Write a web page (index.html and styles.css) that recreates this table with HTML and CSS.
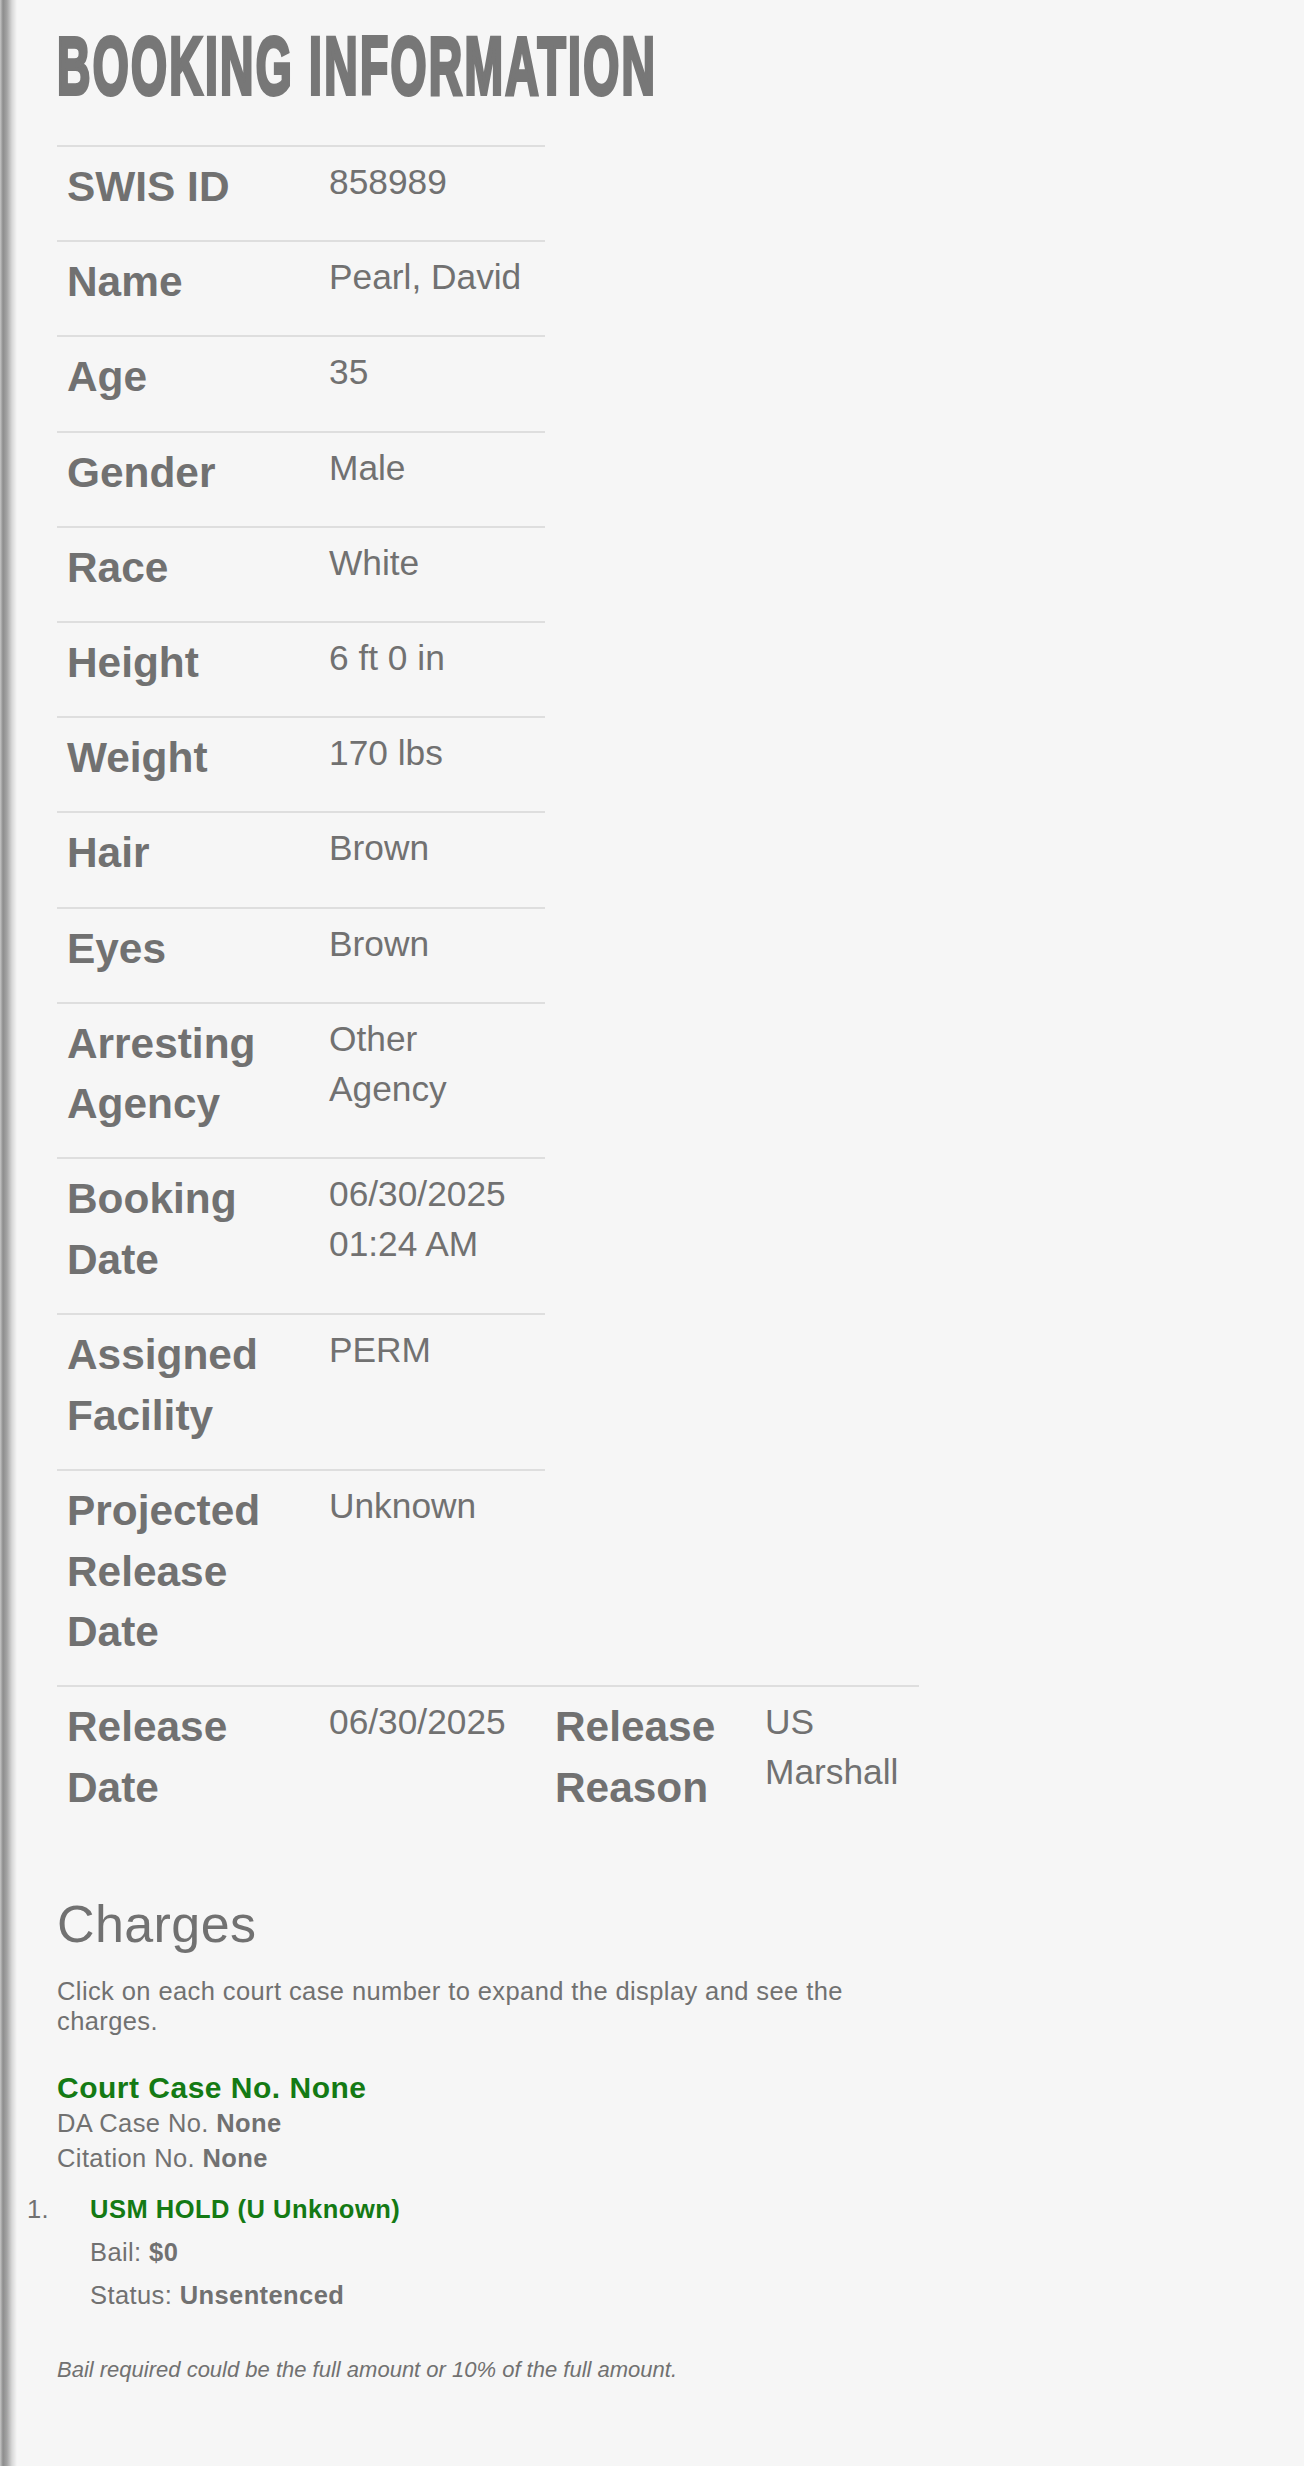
FILE: index.html
```html
<!DOCTYPE html>
<html lang="en">
<head>
    <meta charset="UTF-8">
    <meta name="viewport" content="width=device-width, initial-scale=1.0">
    <title>Booking Information</title>
    <link rel="stylesheet" href="styles.css">
</head>
<body>
    <div class="container">
        <h1 class="page-title">Booking Information</h1>

        <table class="booking">
            <tr><th class="col-label">SWIS ID</th><td class="col-value">858989</td></tr>
            <tr><th>Name</th><td>Pearl, David</td></tr>
            <tr><th>Age</th><td>35</td></tr>
            <tr><th>Gender</th><td>Male</td></tr>
            <tr><th>Race</th><td>White</td></tr>
            <tr><th>Height</th><td>6 ft 0 in</td></tr>
            <tr><th>Weight</th><td>170 lbs</td></tr>
            <tr><th>Hair</th><td>Brown</td></tr>
            <tr><th>Eyes</th><td>Brown</td></tr>
            <tr><th>Arresting Agency</th><td>Other Agency</td></tr>
            <tr><th>Booking Date</th><td>06/30/2025 01:24 AM</td></tr>
            <tr><th>Assigned Facility</th><td>PERM</td></tr>
            <tr><th>Projected Release Date</th><td>Unknown</td></tr>
        </table>

        <table class="booking wide">
            <tr>
                <th class="col-label">Release Date</th>
                <td class="col-value">06/30/2025</td>
                <th class="col-label2">Release Reason</th>
                <td class="col-value2">US Marshall</td>
            </tr>
        </table>

        <h2 class="charges-title">Charges</h2>
        <p class="hint">Click on each court case number to expand the display and see the charges.</p>

        <div class="case">
            <h3 class="case-title">Court Case No. None</h3>
            <div class="case-line">DA Case No. <strong>None</strong></div>
            <div class="case-line">Citation No. <strong>None</strong></div>

            <ol class="charge-list">
                <li>
                    <span class="num">1.</span>
                    <div class="charge">
                        <div class="charge-name">USM HOLD (U Unknown)</div>
                        <div>Bail: <strong>$0</strong></div>
                        <div>Status: <strong>Unsentenced</strong></div>
                    </div>
                </li>
            </ol>
        </div>

        <p class="note">Bail required could be the full amount or 10% of the full amount.</p>
    </div>
</body>
</html>
```

FILE: styles.css
```css
html {
    background-color: #f6f6f6;
}
body {
    margin: 0;
    min-height: 100vh;
    font-family: "Liberation Sans", Arial, Helvetica, sans-serif;
    color: #717171;
    background-image: linear-gradient(to right, #c6c6c6 0, #8d8d8d 3px, #a4a4a4 7px, #d8d8d8 12px, #f6f6f6 17px);
    background-size: 17px 100%;
    background-repeat: no-repeat;
}
.container {
    width: 862px;
    padding: 22px 0 60px 57px;
}
/* condensed display title */
.page-title {
    margin: 0 0 35px;
    font-family: "Liberation Sans", Arial, sans-serif;
    font-size: 81px;
    line-height: 88px;
    font-weight: bold;
    letter-spacing: 4px;
    text-transform: uppercase;
    color: #777;
    -webkit-text-stroke: 4px #777;
    white-space: nowrap;
    transform: scaleX(0.571);
    transform-origin: left center;
}
.booking {
    border-collapse: separate;
    border-spacing: 0;
    table-layout: fixed;
    width: 488px;
}
.booking.wide {
    width: 862px;
}
.booking th,
.booking td {
    box-sizing: border-box;
    border-top: 2px solid #dedede;
    padding: 10px 10px 22.6px;
    vertical-align: top;
    text-align: left;
}
.booking th {
    font-size: 42.4px;
    line-height: 60.6px;
    font-weight: bold;
}
.booking td {
    font-size: 35.3px;
    line-height: 50px;
}
.col-label {
    width: 262px;
}
.col-value {
    width: 226px;
}
.col-label2 {
    width: 210px;
}
.col-value2 {
    width: 164px;
}
.charges-title {
    margin: 55px 0 23px;
    font-size: 52px;
    line-height: 57px;
    font-weight: normal;
    letter-spacing: 0.4px;
}
.hint {
    margin: 0 0 34.5px;
    font-size: 25.5px;
    line-height: 30px;
    letter-spacing: 0.4px;
}
.case {
    font-size: 25.5px;
    line-height: 34.4px;
    letter-spacing: 0.4px;
}
.case-title {
    margin: 0 0 1.5px;
    font-size: 30px;
    line-height: 34px;
    letter-spacing: 0.5px;
    color: #147a14;
}
.charge-list {
    list-style: none;
    margin: 13px 0 0 -30px;
    padding: 0;
}
.charge-list li {
    display: flex;
    line-height: 43px;
}
.num {
    width: 63px;
    flex-shrink: 0;
}
.charge-name {
    font-weight: bold;
    letter-spacing: 0.5px;
    color: #147a14;
}
.note {
    margin: 36.5px 0 0;
    font-size: 22px;
    line-height: 31px;
    font-style: italic;
}
```
